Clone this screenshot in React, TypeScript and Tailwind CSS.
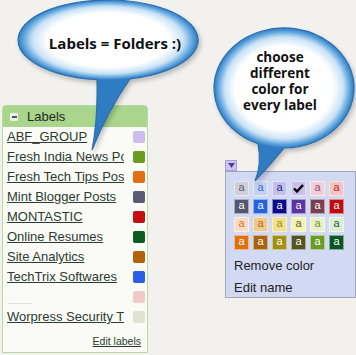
import React from "react";

type Swatch = { bg: string; fg: string; check?: boolean };

const labels = [
  { name: "ABF_GROUP", color: "#cdbcf0" },
  { name: "Fresh India News Posts", color: "#6b9b1f" },
  { name: "Fresh Tech Tips Posts", color: "#e56d14" },
  { name: "Mint Blogger Posts", color: "#5b5b78" },
  { name: "MONTASTIC", color: "#c40f0f" },
  { name: "Online Resumes", color: "#0d5b22" },
  { name: "Site Analytics", color: "#b5610b" },
  { name: "TechTrix Softwares", color: "#2b5ee6" },
  { name: "", color: "#f2c9c4" },
  { name: "Worpress Security Tips", color: "#e2e2d4" },
];

const palette: Swatch[] = [
  { bg: "#cfcfdc", fg: "#5a5a6a" },
  { bg: "#c5d2ee", fg: "#3b6bd0" },
  { bg: "#c4c0ea", fg: "#25239a" },
  { bg: "#c9bfe9", fg: "#000", check: true },
  { bg: "#f0cfda", fg: "#a0455a" },
  { bg: "#f3c6c6", fg: "#c42020" },
  { bg: "#565670", fg: "#fff" },
  { bg: "#2563dd", fg: "#fff" },
  { bg: "#0d0d8c", fg: "#fff" },
  { bg: "#5a34a3", fg: "#fff" },
  { bg: "#7a4050", fg: "#fff" },
  { bg: "#c00a10", fg: "#fff" },
  { bg: "#f7dcc6", fg: "#e0701c" },
  { bg: "#f0c98f", fg: "#b56812" },
  { bg: "#f3e08c", fg: "#a39012" },
  { bg: "#f5f2b5", fg: "#5e5d20" },
  { bg: "#eaefc6", fg: "#6e9826" },
  { bg: "#dceed5", fg: "#1e5a2e" },
  { bg: "#e0700e", fg: "#fff" },
  { bg: "#a9620e", fg: "#fff" },
  { bg: "#a29012", fg: "#fff" },
  { bg: "#545424", fg: "#fff" },
  { bg: "#6b9b24", fg: "#fff" },
  { bg: "#0b5424", fg: "#fff" },
];

const LabelsPanel = () => (
  <div className="w-[146px] rounded-t-[4px] border border-[#b5dba2] bg-[#fafaf7]">
    <div className="flex h-[21px] items-center gap-[9px] bg-[#a9d58d] pl-[7px] text-[13px] text-[#1f2a1f]">
      <span className="flex h-[8px] w-[8px] items-center justify-center rounded-[1px] bg-[#e9f1e6]">
        <span className="h-[2px] w-[5px] bg-[#555]" />
      </span>
      <span>Labels</span>
    </div>
    {labels.map((l, i) => (
      <div key={i} className="flex h-[20px] items-center pl-[4px] pr-[2px] text-[13px] text-[#2d3b30]">
        <div className="flex h-full w-[117px] items-center overflow-hidden whitespace-nowrap">
          {l.name ? (
            <span className="underline underline-offset-[1px]">{l.name}</span>
          ) : (
            <span className="mt-[12px] h-px w-[26px] bg-[#e2e2de]" />
          )}
        </div>
        <span className="ml-auto h-[12px] w-[12px] rounded-[2px]" style={{ backgroundColor: l.color }} />
      </div>
    ))}
    <div className="mt-[5px] flex h-[20px] items-center justify-end pr-[6px] text-[10.5px] text-[#2d3b30]">
      <span className="underline">Edit labels</span>
    </div>
  </div>
);

const ColorMenu = () => (
  <div className="flex flex-col">
    <div className="flex h-[11px] w-[12px] items-center justify-center border border-[#a99fe0] bg-[#cbc6f0]">
      <svg width="7" height="5" viewBox="0 0 7 5">
        <polygon points="0,0 7,0 3.5,5" fill="#573a9c" />
      </svg>
    </div>
    <div className="h-[127px] w-[131px] border border-[#a4a6b8] bg-[#d2d9f2] pl-[8px] pt-[9px]">
      <div className="grid w-fit grid-cols-6 gap-x-[4px] gap-y-[3px]">
        {palette.map((s, i) => (
          <div
            key={i}
            className="flex h-[15px] w-[15px] items-center justify-center border border-white/50 text-[11px] leading-none"
            style={{ backgroundColor: s.bg, color: s.fg }}
          >
            {s.check ? (
              <svg width="11" height="9" viewBox="0 0 11 9">
                <polyline points="1,4.5 4,7.5 10,1" fill="none" stroke="#000" strokeWidth="2.4" />
              </svg>
            ) : (
              <span className="-mt-[2px]">a</span>
            )}
          </div>
        ))}
      </div>
      <div className="mt-[5px] text-[13px] leading-[20px] text-[#222]">
        <div className="py-[1px]">Remove color</div>
        <div className="py-[1px]">Edit name</div>
      </div>
    </div>
  </div>
);

const Bubbles = () => (
  <svg
    className="pointer-events-none absolute left-0 top-0"
    width="356"
    height="355"
    viewBox="0 0 356 355"
    style={{ filter: "drop-shadow(2px 3px 2px rgba(0,0,0,0.22))" }}
  >
    <defs>
      <radialGradient id="g1" gradientUnits="userSpaceOnUse" cx="0" cy="0" r="1" gradientTransform="translate(108 40) scale(90 40)">
        <stop offset="0" stopColor="#ffffff" />
        <stop offset="0.68" stopColor="#ffffff" />
        <stop offset="0.84" stopColor="#c9e2f6" />
        <stop offset="0.94" stopColor="#5fa5dd" />
        <stop offset="1" stopColor="#2f7cc2" />
      </radialGradient>
      <radialGradient id="g2" gradientUnits="userSpaceOnUse" cx="0" cy="0" r="1" gradientTransform="translate(284 88) scale(70 60)">
        <stop offset="0" stopColor="#ffffff" />
        <stop offset="0.7" stopColor="#ffffff" />
        <stop offset="0.85" stopColor="#c9e2f6" />
        <stop offset="0.94" stopColor="#5fa5dd" />
        <stop offset="1" stopColor="#2f7cc2" />
      </radialGradient>
    </defs>
    <path
      d="M130 78.8 A90 40 0 1 0 97 79.7 Q98 120 92 150 Q108 110 130 78.8 Z"
      fill="url(#g1)"
      stroke="#2a6fb0"
      strokeWidth="1.2"
    />
    <path
      d="M284 148 A70 60 0 1 0 258 143.7 Q262 165 255 181 Q270 165 284 148 Z"
      fill="url(#g2)"
      stroke="#2a6fb0"
      strokeWidth="1.2"
    />
  </svg>
);

export default function App() {
  return (
    <div
      className="relative h-[355px] w-[356px] overflow-hidden bg-[#f2f1ee]"
      style={{ fontFamily: '"Liberation Sans", Arial, sans-serif' }}
    >
      <div className="flex items-start pl-[2px] pt-[105px]">
        <LabelsPanel />
        <div className="ml-[77px] mt-[55px]">
          <ColorMenu />
        </div>
      </div>
      <Bubbles />
      <div
        className="absolute left-[35px] top-[32px] w-[160px] text-center text-[15px] font-bold leading-[22px] text-[#111]"
        style={{ fontFamily: '"Open Sans", sans-serif' }}
      >
        Labels = Folders :)
      </div>
      <div
        className="absolute left-[225px] top-[49px] flex w-[110px] flex-col items-center text-[13.5px] font-bold text-[#111]"
        style={{ fontFamily: '"Open Sans", sans-serif' }}
      >
        <div className="h-[16px] leading-[16px]">choose</div>
        <div className="h-[16px] leading-[16px]">different</div>
        <div className="h-[16px] leading-[16px]">color for</div>
        <div className="h-[16px] leading-[16px]">every label</div>
      </div>
    </div>
  );
}
